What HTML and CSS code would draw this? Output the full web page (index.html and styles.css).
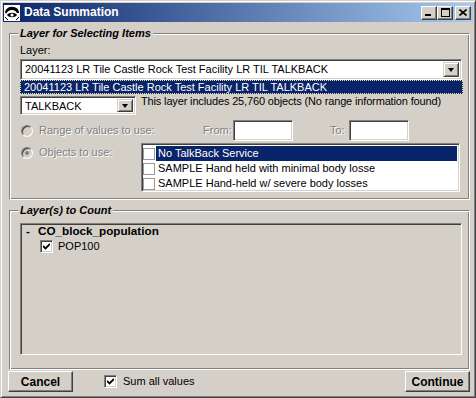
FILE: index.html
```html
<!DOCTYPE html>
<html lang="en">
<head>
    <meta charset="UTF-8">
    <title>Data Summation</title>
    <link rel="stylesheet" href="styles.css">
</head>
<body>
<div class="window">

    <!-- Caption bar -->
    <div class="titlebar">
        <svg class="app-icon" width="16" height="16" viewBox="0 0 16 16">
            <rect x="0" y="0" width="16" height="16" fill="#fff"/>
            <path d="M1 7 C2 3 6 1 9 2 C12 2 15 4 15 8 L13 8 C12 6 10 5 8 5 C5 5 3 7 2 9 Z" fill="#000"/>
            <path d="M3 10 C5 7 11 7 13 10 C11 13 5 13 3 10 Z" fill="#000"/>
            <circle cx="8" cy="10" r="1.6" fill="#fff"/>
            <path d="M1 12 L4 15 M12 15 L15 12" stroke="#000" stroke-width="1"/>
        </svg>
        <span class="title">Data Summation</span>
        <div class="caption-btns">
            <button class="cap-btn">
                <svg width="8" height="7" viewBox="0 0 8 7"><rect x="0" y="5" width="6" height="2" fill="#000"/></svg>
            </button>
            <button class="cap-btn">
                <svg width="9" height="9" viewBox="0 0 9 9"><rect x="0.5" y="0.5" width="8" height="8" fill="none" stroke="#000"/><rect x="0" y="0" width="9" height="2" fill="#000"/></svg>
            </button>
            <button class="cap-btn close">
                <svg width="8" height="7" viewBox="0 0 8 7"><path d="M0.5 0.5 L7.5 6.5 M7.5 0.5 L0.5 6.5" stroke="#000" stroke-width="1.6"/></svg>
            </button>
        </div>
    </div>

    <div class="client">

        <!-- First group -->
        <fieldset class="group group-select">
            <legend>Layer for Selecting Items</legend>
            <div class="field-label">Layer:</div>
            <div class="combo combo-wide">
                <span class="combo-text">20041123 LR Tile Castle Rock Test Facility LR TIL TALKBACK</span>
                <span class="drop-btn"><span class="arrow"></span></span>
            </div>
            <div class="drop-item">20041123 LR Tile Castle Rock Test Facility LR TIL TALKBACK</div>

            <div class="field-row">
                <div class="combo combo-small">
                    <span class="combo-text">TALKBACK</span>
                    <span class="drop-btn"><span class="arrow"></span></span>
                </div>
                <span class="layer-note">This layer includes 25,760 objects (No range information found)</span>
            </div>

            <div class="range-row">
                <label class="option option-range"><span class="radio"></span>Range of values to use:</label>
                <span class="disabled-text from-label">From:</span>
                <span class="textbox"></span>
                <span class="disabled-text to-label">To:</span>
                <span class="textbox"></span>
            </div>

            <div class="objects-row">
                <label class="option option-objects"><span class="radio checked"></span>Objects to use:</label>
                <div class="listbox">
                    <div class="list-item selected"><span class="flat-check"></span><span class="item-text">No TalkBack Service</span></div>
                    <div class="list-item"><span class="flat-check"></span><span class="item-text">SAMPLE Hand held with minimal body losse</span></div>
                    <div class="list-item"><span class="flat-check"></span><span class="item-text">SAMPLE Hand-held w/ severe body losses</span></div>
                </div>
            </div>
        </fieldset>

        <!-- Second group -->
        <fieldset class="group group-count">
            <legend>Layer(s) to Count</legend>
            <div class="tree">
                <div class="tree-node"><span class="tree-toggle">-</span>CO_block_population</div>
                <div class="tree-leaf">
                    <span class="check">
                        <svg width="7" height="7" viewBox="0 0 7 7"><path d="M0 3 L2.5 5.5 L7 1" fill="none" stroke="#000" stroke-width="1.8"/></svg>
                    </span>
                    POP100
                </div>
            </div>
        </fieldset>

        <div class="footer">
            <button class="push-btn">Cancel</button>
            <label class="sum-option">
                <span class="check">
                    <svg width="7" height="7" viewBox="0 0 7 7"><path d="M0 3 L2.5 5.5 L7 1" fill="none" stroke="#000" stroke-width="1.8"/></svg>
                </span>
                Sum all values
            </label>
            <button class="push-btn continue">Continue</button>
        </div>
    </div>
</div>
</body>
</html>
```

FILE: styles.css
```css
body {
    margin: 0;
    background: #d4d0c8;
    font-family: "Liberation Sans", Arial, sans-serif;
    font-size: 11px;
    line-height: 13px;
    color: #000;
}

/* Window frame */
.window {
    width: 476px;
    height: 398px;
    box-sizing: border-box;
    border: 1px solid;
    border-color: #d4d0c8 #404040 #404040 #d4d0c8;
    box-shadow: inset 1px 1px #fff, inset -1px -1px #808080;
    padding: 2px 2px 3px 2px;
    display: flex;
    flex-direction: column;
}

.titlebar {
    height: 19px;
    flex: none;
    display: flex;
    align-items: center;
    background: linear-gradient(to right, #0a246a, #a6caf0);
    color: #fff;
}

.app-icon {
    margin-left: 1px;
    flex: none;
}

.title {
    margin-left: 4px;
    font-weight: bold;
    font-size: 12px;
}

.caption-btns {
    margin-left: auto;
    margin-right: 2px;
    display: flex;
}

.cap-btn {
    width: 16px;
    height: 14px;
    padding: 0;
    box-sizing: border-box;
    background: #d4d0c8;
    border: 1px solid;
    border-color: #fff #404040 #404040 #fff;
    box-shadow: inset -1px -1px #808080;
    display: flex;
    align-items: center;
    justify-content: center;
}

.cap-btn.close {
    margin-left: 2px;
}

.client {
    flex: 1;
    display: flex;
    flex-direction: column;
    padding: 0 3px 0 6px;
}

/* Etched group boxes */
.group {
    margin: 5px 0 0;
    padding: 4px 7px 7px 10px;
    border: 1px solid;
    border-color: #808080 #fff #fff #808080;
    box-shadow: inset 1px 1px #fff, inset -1px -1px #808080;
    min-width: 0;
}

.group legend {
    margin-left: -2px;
    padding: 0 2px;
    background: #d4d0c8;
    font-weight: bold;
    font-style: italic;
    line-height: 13px;
}

.field-label {
    height: 13px;
}

/* Combo boxes */
.combo {
    height: 21px;
    box-sizing: border-box;
    display: flex;
    background: #fff;
    border: 1px solid;
    border-color: #808080 #fff #fff #808080;
    box-shadow: inset 1px 1px #404040, inset -1px -1px #d4d0c8;
    padding: 2px;
}

.combo-wide {
    margin-top: 2px;
}

.combo-small {
    width: 116px;
    height: 19px;
    flex: none;
}

.combo-text {
    flex: 1;
    padding-left: 2px;
    line-height: 15px;
    white-space: nowrap;
    overflow: hidden;
}

.drop-btn {
    width: 16px;
    box-sizing: border-box;
    background: #d4d0c8;
    border: 1px solid;
    border-color: #d4d0c8 #404040 #404040 #d4d0c8;
    box-shadow: inset 1px 1px #fff, inset -1px -1px #808080;
    display: flex;
    align-items: center;
    justify-content: center;
}

.arrow {
    width: 0;
    height: 0;
    border-left: 3.5px solid transparent;
    border-right: 3.5px solid transparent;
    border-top: 4px solid #000;
}

.drop-item {
    height: 14px;
    box-sizing: border-box;
    margin-right: -1px;
    padding-left: 3px;
    background: #0a246a;
    color: #fff;
    border: 1px dotted #e8e0a0;
    line-height: 12px;
    white-space: nowrap;
    overflow: hidden;
}

.field-row {
    margin-top: 2px;
    display: flex;
    gap: 5px;
}

.layer-note {
    line-height: 11px;
    letter-spacing: -0.15px;
}

/* Radio options */
.range-row {
    margin-top: 5px;
    height: 21px;
    display: flex;
    align-items: center;
}

.option {
    display: flex;
    align-items: center;
    color: #808080;
    text-shadow: 1px 1px #fff;
}

.option-range {
    width: 183px;
}

.option-objects {
    width: 121px;
    flex: none;
    align-self: flex-start;
    margin-top: 3px;
}

.radio {
    width: 12px;
    height: 12px;
    box-sizing: border-box;
    margin: 0 6px 0 1px;
    border-radius: 50%;
    background: #d4d0c8;
    border: 1px solid;
    border-color: #808080 #fff #fff #808080;
    box-shadow: inset 1px 1px #404040;
    position: relative;
}

.radio.checked::after {
    content: "";
    position: absolute;
    left: 3px;
    top: 3px;
    width: 4px;
    height: 4px;
    border-radius: 50%;
    background: #808080;
}

.disabled-text {
    color: #808080;
    text-shadow: 1px 1px #fff;
}

.from-label {
    width: 30px;
}

.to-label {
    width: 19px;
    margin-left: 37px;
}

.textbox {
    width: 60px;
    height: 21px;
    box-sizing: border-box;
    background: #fff;
    border: 1px solid;
    border-color: #808080 #fff #fff #808080;
    box-shadow: inset 1px 1px #404040, inset -1px -1px #d4d0c8;
}

.objects-row {
    margin-top: 2px;
    display: flex;
}

.listbox {
    width: 319px;
    height: 49px;
    box-sizing: border-box;
    background: #fff;
    border: 1px solid;
    border-color: #808080 #fff #fff #808080;
    box-shadow: inset 1px 1px #404040, inset -1px -1px #d4d0c8;
    padding: 2px 2px 0 1px;
}

.list-item {
    height: 15px;
    display: flex;
    align-items: center;
    white-space: nowrap;
}

.flat-check {
    width: 12px;
    height: 12px;
    box-sizing: border-box;
    margin-right: 1px;
    flex: none;
    background: #fff;
    border: 1px solid #9a9a9a;
}

.item-text {
    flex: 1;
    align-self: stretch;
    padding-left: 2px;
    line-height: 15px;
}

.list-item.selected .item-text {
    background: #0a246a;
    color: #fff;
}

/* Layer(s) to Count */
.group-count {
    margin-top: 4px;
    padding-bottom: 14px;
}

.tree {
    margin-top: 2px;
    height: 132px;
    box-sizing: border-box;
    border: 1px solid;
    border-color: #808080 #fff #fff #808080;
    box-shadow: inset 1px 1px #404040, inset -1px -1px #d4d0c8;
    padding: 0 0 0 5px;
}

.tree-node {
    font-weight: bold;
    font-size: 11.7px;
    line-height: 14px;
}

.tree-toggle {
    display: inline-block;
    width: 12px;
}

.tree-leaf {
    margin-top: 2px;
    padding-left: 14px;
    display: flex;
    align-items: center;
}

.check {
    width: 13px;
    height: 13px;
    box-sizing: border-box;
    margin-right: 5px;
    background: #fff;
    border: 1px solid;
    border-color: #808080 #fff #fff #808080;
    box-shadow: inset 1px 1px #404040, inset -1px -1px #d4d0c8;
    display: flex;
    align-items: center;
    justify-content: center;
}

/* Bottom buttons */
.footer {
    margin-top: 1px;
    margin-left: -1px;
    display: flex;
    align-items: center;
}

.push-btn {
    width: 65px;
    height: 21px;
    padding: 0;
    box-sizing: border-box;
    background: #d4d0c8;
    font-family: "Liberation Sans", Arial, sans-serif;
    font-size: 12px;
    font-weight: bold;
    color: #000;
    border: 1px solid;
    border-color: #fff #404040 #404040 #fff;
    box-shadow: inset -1px -1px #808080;
}

.push-btn.continue {
    margin-left: auto;
}

.sum-option {
    margin-left: 31px;
    display: flex;
    align-items: center;
}

.sum-option .check {
    margin-right: 6px;
}
```
